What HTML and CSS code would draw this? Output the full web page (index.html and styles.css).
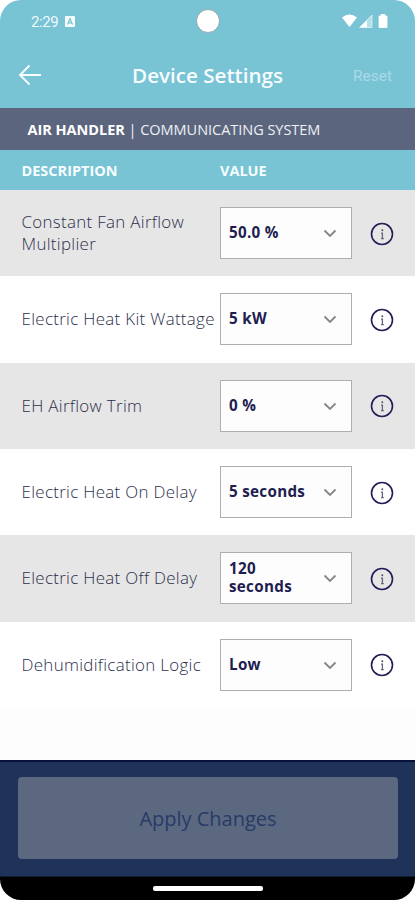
FILE: index.html
```
<!DOCTYPE html>
<html lang="en">
<head>
<meta charset="utf-8">
<title>Device Settings</title>
<link rel="stylesheet" href="styles.css">
</head>
<body>
<svg class="defs" width="0" height="0" aria-hidden="true">
  <symbol id="chevron" viewBox="0 0 14 9"><path d="M1.5 1.5 7 7l5.500-5.500" fill="none" stroke="#858585" stroke-width="1.8"/></symbol>
  <symbol id="info" viewBox="0 0 24 24"><circle cx="12" cy="12" r="10.500" fill="none" stroke="#211d57" stroke-width="1.600"/><circle cx="12.300" cy="8.300" r="1" fill="#555465"/><path d="M11 11.200h1.400v5.300M11 16.600h2.800" fill="none" stroke="#66657a" stroke-width="1.300"/></symbol>
</svg>
<div class="phone">
  <div class="status">
    <span class="clock">2:29</span>
    <svg class="badge" viewBox="0 0 10 11"><rect width="10" height="11" rx="1" fill="#f4fcfe"/><path d="M2.500 8.500 5 2.800l2.500 5.700M3.500 6.800h3" fill="none" stroke="#78c3d4" stroke-width="1.200"/></svg>
    <span class="camera"></span>
    <svg class="signals" viewBox="0 0 46 15"><path d="M0 3.500Q7.500-2.500 15 3.500L7.500 13Z" fill="#fff"/><path d="M30 1v12.500H17.500Z" fill="#b5dfe8"/><path d="M25 6v7.500h-7.500Z" fill="#fff"/><path d="M30 1v12.500H17.500Z" fill="none" stroke="#e5f6f9" stroke-width=".7"/><path d="M37 2h2V.5h4V2h2v11.500h-8Z" fill="#fff" stroke="#fff" stroke-width=".8" stroke-linejoin="round"/></svg>
  </div>
  <header class="bar">
    <svg class="back" viewBox="0 0 24 22"><path d="M23 11H2M11.500 1.500 2 11l9.500 9.500" fill="none" stroke="#f5fdff" stroke-width="2"/></svg>
    <h1>Device Settings</h1>
    <span class="reset">Reset</span>
  </header>
  <div class="system"><b>AIR HANDLER</b> | COMMUNICATING SYSTEM</div>
  <div class="heads"><span>DESCRIPTION</span><span>VALUE</span></div>
  <main>
    <div class="row"><span class="name">Constant Fan Airflow<br>Multiplier</span><div class="select"><span>50.0 %</span><svg class="chev"><use href="#chevron"/></svg></div><svg class="info"><use href="#info"/></svg></div>
    <div class="row"><span class="name">Electric Heat Kit Wattage</span><div class="select"><span>5 kW</span><svg class="chev"><use href="#chevron"/></svg></div><svg class="info"><use href="#info"/></svg></div>
    <div class="row"><span class="name">EH Airflow Trim</span><div class="select"><span>0 %</span><svg class="chev"><use href="#chevron"/></svg></div><svg class="info"><use href="#info"/></svg></div>
    <div class="row"><span class="name">Electric Heat On Delay</span><div class="select"><span>5 seconds</span><svg class="chev"><use href="#chevron"/></svg></div><svg class="info"><use href="#info"/></svg></div>
    <div class="row"><span class="name">Electric Heat Off Delay</span><div class="select"><span>120<br>seconds</span><svg class="chev"><use href="#chevron"/></svg></div><svg class="info"><use href="#info"/></svg></div>
    <div class="row"><span class="name">Dehumidification Logic</span><div class="select"><span>Low</span><svg class="chev"><use href="#chevron"/></svg></div><svg class="info"><use href="#info"/></svg></div>
  </main>
  <footer><div class="apply">Apply Changes</div></footer>
  <div class="nav"><span></span></div>
</div>
</body>
</html>
```
FILE: styles.css
```
* { box-sizing: border-box; }
body { margin: 0; background: #fff; font-family: "Open Sans", sans-serif; }
.defs { position: absolute; }
.phone { width: 415px; height: 900px; display: flex; flex-direction: column; overflow: hidden; border-radius: 21px; background: #fdfdfd; }
.phone > * { flex-shrink: 0; }
.status { height: 43px; display: flex; align-items: center; background: #78c3d4; padding: 0 27px 0 31px; position: relative; }
.clock { font: 400 15px Roboto, sans-serif; color: #eefafc; width: 33.500px; letter-spacing: -.4px; }
.badge { width: 10px; height: 11px; }
.camera { position: absolute; left: 196px; top: 9px; width: 24px; height: 24px; border-radius: 50%; background: #fff; border: 1px solid #98a5a9; }
.signals { width: 46px; height: 15px; margin-left: auto; }
.bar { height: 65px; background: #78c3d4; display: grid; grid-template-columns: 91px 1fr 91px; align-items: center; }
.back { width: 24px; height: 22px; margin: -2px 0 0 18px; }
h1 { margin: 0; padding-bottom: 2px; text-align: center; font-size: 20.600px; line-height: 28px; font-weight: 600; color: #f7fdff; white-space: nowrap; }
.reset { font: 400 15.500px Roboto, sans-serif; color: #a9dbe6; justify-self: end; margin-right: 23px; }
.system { height: 42px; background: #5b667e; color: #eef0f5; font-size: 14.500px; letter-spacing: -.03px; line-height: 43px; padding-left: 27.500px; white-space: nowrap; }
.system b { color: #fff; }
.heads { height: 40px; background: #78c3d4; color: #f5fdff; font-weight: 700; font-size: 14.500px; display: grid; grid-template-columns: 198.500px 1fr; align-items: center; padding: 0 0 0 21.500px; }
main { height: 518px; display: grid; grid-template-rows: repeat(6, 1fr); }
.row { display: grid; grid-template-columns: 198.500px 132px 24px; align-items: center; padding-left: 21.500px; background: #fff; }
.row:nth-child(odd) { background: #e6e6e6; }
.name { font-size: 16.900px; line-height: 22px; letter-spacing: .32px; font-weight: 300; color: #2c2f4c; white-space: nowrap; }
.select { height: 52px; border: 1px solid #aeaeae; background: #fdfdfd; display: flex; align-items: center; justify-content: space-between; padding: 0 14px 2px 8px; font-size: 15.200px; letter-spacing: .3px; line-height: 18px; font-weight: 700; color: #211d50; }
.chev { width: 14px; height: 9px; margin-top: 3px; }
.info { width: 24px; height: 24px; margin: 1px 0 0 18px; }
footer { height: 117px; margin-top: 52px; background: #1e325a; border-top: 2px solid #07103b; border-bottom: 1px solid #111b38; padding: 15px 17px 0 18px; }
.apply { height: 82px; border-radius: 4px; background: #5c687f; color: #263b68; font-size: 20px; display: flex; align-items: center; justify-content: center; }
.nav { height: 23px; background: #000; display: flex; justify-content: center; padding-top: 9px; }
.nav span { width: 110px; height: 5px; border-radius: 2px; background: #fff; }
```
